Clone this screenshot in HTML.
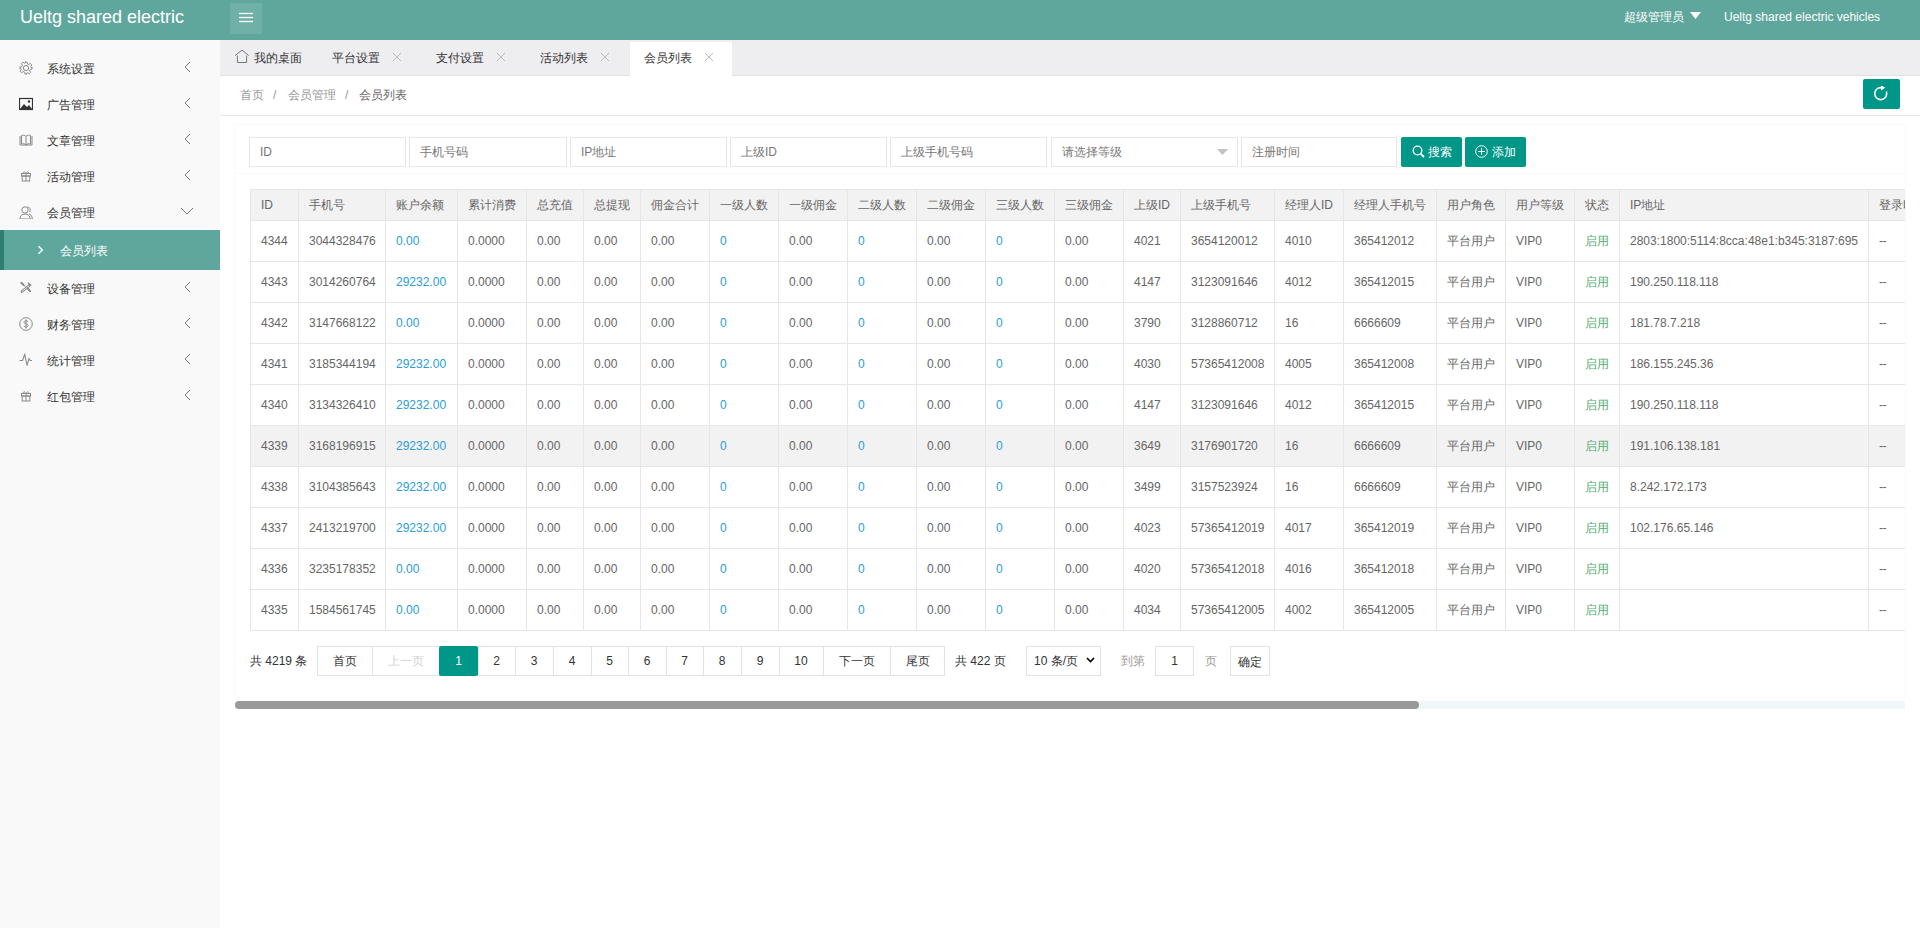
<!DOCTYPE html><html><head><meta charset="utf-8"><style>
*{margin:0;padding:0;box-sizing:border-box}
html,body{width:1920px;height:928px;overflow:hidden;background:#fff;font-family:"Liberation Sans",sans-serif;font-size:12px;color:#666}
.abs{position:absolute}
.t{position:absolute;white-space:nowrap;line-height:14px}
#hdr{left:0;top:0;width:1920px;height:40px;background:#5fa79d}
#side{left:0;top:40px;width:220px;height:888px;background:#f9f9f9}
#tabs{left:220px;top:40px;width:1700px;height:36px;background:#eeeef1;border-bottom:1px solid #e2e2e2}
.cell{position:absolute;white-space:nowrap;overflow:hidden;line-height:14px}
</style></head><body>
<div id="hdr" class="abs"></div>
<div class="t" style="left:20px;top:6px;font-size:18px;line-height:22px;color:#fff">Ueltg shared electric</div>
<div class="abs" style="left:230px;top:3px;width:32px;height:31px;background:rgba(255,255,255,0.1);border-radius:1px"></div>
<svg class="abs" style="left:238px;top:11px" width="16" height="13" viewBox="0 0 16 13"><g stroke="#fff" stroke-width="1.3"><line x1="1" y1="2.5" x2="15" y2="2.5"/><line x1="1" y1="6.5" x2="15" y2="6.5"/><line x1="1" y1="10.5" x2="15" y2="10.5"/></g></svg>
<div class="t" style="left:1624px;top:10px;color:#fff">超级管理员</div>
<svg class="abs" style="left:1690px;top:12px" width="11" height="7" viewBox="0 0 11 7"><path d="M0 0H11L5.5 7Z" fill="#fff"/></svg>
<div class="t" style="left:1724px;top:10px;color:#fff">Ueltg shared electric vehicles</div>
<div id="side" class="abs"></div>
<div class="t" style="left:47px;top:62px;color:#333">系统设置</div>
<svg class="abs" style="left:19px;top:61px" width="14" height="14" viewBox="0 0 14 14"><circle cx="7" cy="7" r="2.6" fill="none" stroke="#888" stroke-width="1"/><path d="M6 1h2l.4 1.8 1.4.6 1.6-1 1.4 1.4-1 1.6.6 1.4L13 6v2l-1.8.4-.6 1.4 1 1.6-1.4 1.4-1.6-1-1.4.6L8 13H6l-.4-1.8-1.4-.6-1.6 1-1.4-1.4 1-1.6-.6-1.4L1 8V6l1.8-.4.6-1.4-1-1.6 1.4-1.4 1.6 1 1.4-.6Z" fill="none" stroke="#888" stroke-width="1"/></svg>
<svg class="abs" style="left:183px;top:61px" width="8" height="12" viewBox="0 0 8 12"><path d="M7 1L2 6l5 5" fill="none" stroke="#777" stroke-width="1"/></svg>
<div class="t" style="left:47px;top:98px;color:#333">广告管理</div>
<svg class="abs" style="left:19px;top:97px" width="14" height="14" viewBox="0 0 14 14"><rect x="0.5" y="1.5" width="13" height="11" fill="none" stroke="#333" stroke-width="1.2"/><path d="M1 12L5 7l3 3 2-2 3 4Z" fill="#333"/><circle cx="10" cy="4.5" r="1.2" fill="#333"/></svg>
<svg class="abs" style="left:183px;top:97px" width="8" height="12" viewBox="0 0 8 12"><path d="M7 1L2 6l5 5" fill="none" stroke="#777" stroke-width="1"/></svg>
<div class="t" style="left:47px;top:134px;color:#333">文章管理</div>
<svg class="abs" style="left:19px;top:133px" width="14" height="14" viewBox="0 0 14 14"><path d="M1 3v9h5.5c.3 0 .5.5.5.5s.2-.5.5-.5H13V3M7 4v8M2.5 2.5C4 2 5.5 2 7 3.5 8.5 2 10 2 11.5 2.5V11c-1.5-.5-3-.5-4.5 1-1.5-1.5-3-1.5-4.5-1Z" fill="none" stroke="#888" stroke-width="1"/></svg>
<svg class="abs" style="left:183px;top:133px" width="8" height="12" viewBox="0 0 8 12"><path d="M7 1L2 6l5 5" fill="none" stroke="#777" stroke-width="1"/></svg>
<div class="t" style="left:47px;top:170px;color:#333">活动管理</div>
<svg class="abs" style="left:19px;top:169px" width="14" height="14" viewBox="0 0 14 14"><rect x="2.5" y="4.5" width="9" height="2.5" fill="none" stroke="#8a8a8a" stroke-width="1"/><rect x="3.2" y="7" width="7.6" height="5" fill="none" stroke="#8a8a8a" stroke-width="1"/><path d="M7 4.5v7.5M7 4.5C5.5 2 4 2.5 4.5 4.5M7 4.5c1.5-2.5 3-2 2.5 0" fill="none" stroke="#8a8a8a" stroke-width="1"/></svg>
<svg class="abs" style="left:183px;top:169px" width="8" height="12" viewBox="0 0 8 12"><path d="M7 1L2 6l5 5" fill="none" stroke="#777" stroke-width="1"/></svg>
<div class="t" style="left:47px;top:206px;color:#333">会员管理</div>
<svg class="abs" style="left:19px;top:205px" width="14" height="14" viewBox="0 0 14 14"><circle cx="6" cy="5" r="3.2" fill="none" stroke="#888" stroke-width="1"/><path d="M0.8 14c0-3 2.2-5 5.2-5s5.2 2 5.2 5Z" fill="none" stroke="#888" stroke-width="1"/><path d="M8.5 2c2.5 0 3.5 3 2 5M10 9c2 .5 3.3 2.5 3.3 5" fill="none" stroke="#888" stroke-width="1"/></svg>
<svg class="abs" style="left:180px;top:207px" width="14" height="8" viewBox="0 0 14 8"><path d="M1 1l6 6 6-6" fill="none" stroke="#777" stroke-width="1"/></svg>
<div class="abs" style="left:0;top:230px;width:220px;height:40px;background:#5fa79d"></div>
<div class="abs" style="left:0;top:230px;width:4px;height:40px;background:#2f7d73"></div>
<svg class="abs" style="left:37px;top:245px" width="7" height="10" viewBox="0 0 7 10"><path d="M1.5 1.2l3.8 3.8-3.8 3.8" fill="none" stroke="#e8fffb" stroke-width="1.6"/></svg>
<div class="t" style="left:60px;top:244px;color:#fff">会员列表</div>
<div class="t" style="left:47px;top:282px;color:#333">设备管理</div>
<svg class="abs" style="left:19px;top:281px" width="14" height="14" viewBox="0 0 14 14"><g transform="translate(1,0.5)"><path d="M1.3 1.3L3.6 3.4" stroke="#8a8a8a" stroke-width="2" stroke-linecap="round"/><path d="M3.6 3.4L5.5 5.2" stroke="#888" stroke-width="1"/><path d="M9.8 3.6L2 10" stroke="#8a8a8a" stroke-width="2.6" stroke-linecap="round"/><path d="M9.6 3.8L2.2 9.8" stroke="#f9f9f9" stroke-width="0.9"/><path d="M8.2 1.2L9.6 3.4 11.2 3.2" fill="none" stroke="#8a8a8a" stroke-width="1.5"/><path d="M7.6 6.8L10 9.6" stroke="#8a8a8a" stroke-width="2.1" stroke-linecap="round"/></g></svg>
<svg class="abs" style="left:183px;top:281px" width="8" height="12" viewBox="0 0 8 12"><path d="M7 1L2 6l5 5" fill="none" stroke="#777" stroke-width="1"/></svg>
<div class="t" style="left:47px;top:318px;color:#333">财务管理</div>
<svg class="abs" style="left:19px;top:317px" width="14" height="14" viewBox="0 0 14 14"><circle cx="7" cy="7" r="6.3" fill="none" stroke="#888" stroke-width="1"/><path d="M9 4.8C8.5 4 7.8 3.8 7 3.8 5.8 3.8 5 4.5 5 5.3c0 1.9 4 1.1 4 3.2 0 .9-.9 1.6-2 1.6-.9 0-1.7-.4-2.1-1.2M7 2.5v9" fill="none" stroke="#888" stroke-width="1"/></svg>
<svg class="abs" style="left:183px;top:317px" width="8" height="12" viewBox="0 0 8 12"><path d="M7 1L2 6l5 5" fill="none" stroke="#777" stroke-width="1"/></svg>
<div class="t" style="left:47px;top:354px;color:#333">统计管理</div>
<svg class="abs" style="left:19px;top:353px" width="14" height="14" viewBox="0 0 14 14"><path d="M0.5 7.5H3.5L5.8 1.5 8 12.5 10 5.5 11.2 7.5H13" fill="none" stroke="#8a8a8a" stroke-width="1.1"/></svg>
<svg class="abs" style="left:183px;top:353px" width="8" height="12" viewBox="0 0 8 12"><path d="M7 1L2 6l5 5" fill="none" stroke="#777" stroke-width="1"/></svg>
<div class="t" style="left:47px;top:390px;color:#333">红包管理</div>
<svg class="abs" style="left:19px;top:389px" width="14" height="14" viewBox="0 0 14 14"><rect x="2.5" y="4.5" width="9" height="2.5" fill="none" stroke="#8a8a8a" stroke-width="1"/><rect x="3.2" y="7" width="7.6" height="5" fill="none" stroke="#8a8a8a" stroke-width="1"/><path d="M7 4.5v7.5M7 4.5C5.5 2 4 2.5 4.5 4.5M7 4.5c1.5-2.5 3-2 2.5 0" fill="none" stroke="#8a8a8a" stroke-width="1"/></svg>
<svg class="abs" style="left:183px;top:389px" width="8" height="12" viewBox="0 0 8 12"><path d="M7 1L2 6l5 5" fill="none" stroke="#777" stroke-width="1"/></svg>
<div id="tabs" class="abs"></div>
<svg class="abs" style="left:234px;top:49px" width="16" height="15" viewBox="0 0 16 15"><path d="M1 6.6L8 1.1l6.8 5.5M3.4 6.6V13.5h9.2V6.6" fill="none" stroke="#777" stroke-width="1"/></svg>
<div class="t" style="left:254px;top:51px;color:#333">我的桌面</div>
<div class="t" style="left:332px;top:51px;color:#333">平台设置</div>
<svg class="abs" style="left:392px;top:52px" width="10" height="10" viewBox="0 0 10 10"><path d="M1 1l8 8M9 1l-8 8" stroke="#bbb" stroke-width="1"/></svg>
<div class="t" style="left:436px;top:51px;color:#333">支付设置</div>
<svg class="abs" style="left:496px;top:52px" width="10" height="10" viewBox="0 0 10 10"><path d="M1 1l8 8M9 1l-8 8" stroke="#bbb" stroke-width="1"/></svg>
<div class="t" style="left:540px;top:51px;color:#333">活动列表</div>
<svg class="abs" style="left:600px;top:52px" width="10" height="10" viewBox="0 0 10 10"><path d="M1 1l8 8M9 1l-8 8" stroke="#bbb" stroke-width="1"/></svg>
<div class="abs" style="left:630px;top:42px;width:102px;height:34px;background:#fff"></div>
<div class="t" style="left:644px;top:51px;color:#333">会员列表</div>
<svg class="abs" style="left:704px;top:52px" width="10" height="10" viewBox="0 0 10 10"><path d="M1 1l8 8M9 1l-8 8" stroke="#bbb" stroke-width="1"/></svg>
<div class="t" style="left:240px;top:88px;color:#999">首页</div>
<div class="t" style="left:273px;top:88px;color:#999">/</div>
<div class="t" style="left:288px;top:88px;color:#999">会员管理</div>
<div class="t" style="left:345px;top:88px;color:#999">/</div>
<div class="t" style="left:359px;top:88px;color:#666">会员列表</div>
<div class="abs" style="left:220px;top:115px;width:1700px;height:1px;background:#e6e6e6"></div>
<div class="abs" style="left:1863px;top:79px;width:37px;height:30px;background:#009688;border-radius:2px"></div>
<svg class="abs" style="left:1873px;top:86px" width="16" height="16" viewBox="0 0 16 16"><path d="M13.4 5.6A6 6 0 1 1 8.2 1.6" fill="none" stroke="#fff" stroke-width="1.6"/><path d="M8 -1L12.2 1.8 8 4.6Z" fill="#fff"/></svg>
<div class="abs" style="left:235px;top:125px;width:1670px;height:48px;background:#fff;box-shadow:0 0 0 1px #fafafa"></div>
<div class="abs" style="left:235px;top:174px;width:1670px;height:523px;background:#fff;box-shadow:0 0 0 1px #fafafa"></div>
<div class="abs" style="left:249px;top:137px;width:157px;height:30px;border:1px solid #e6e6e6;background:#fff"></div>
<div class="t" style="left:260px;top:145px;color:#777">ID</div>
<div class="abs" style="left:409px;top:137px;width:158px;height:30px;border:1px solid #e6e6e6;background:#fff"></div>
<div class="t" style="left:420px;top:145px;color:#777">手机号码</div>
<div class="abs" style="left:570px;top:137px;width:157px;height:30px;border:1px solid #e6e6e6;background:#fff"></div>
<div class="t" style="left:581px;top:145px;color:#777">IP地址</div>
<div class="abs" style="left:730px;top:137px;width:157px;height:30px;border:1px solid #e6e6e6;background:#fff"></div>
<div class="t" style="left:741px;top:145px;color:#777">上级ID</div>
<div class="abs" style="left:890px;top:137px;width:157px;height:30px;border:1px solid #e6e6e6;background:#fff"></div>
<div class="t" style="left:901px;top:145px;color:#777">上级手机号码</div>
<div class="abs" style="left:1051px;top:137px;width:187px;height:30px;border:1px solid #e6e6e6;background:#fff"></div>
<div class="t" style="left:1062px;top:145px;color:#777">请选择等级</div>
<div class="abs" style="left:1241px;top:137px;width:156px;height:30px;border:1px solid #e6e6e6;background:#fff"></div>
<div class="t" style="left:1252px;top:145px;color:#777">注册时间</div>
<svg class="abs" style="left:1217px;top:149px" width="11" height="6" viewBox="0 0 11 6"><path d="M0 0H11L5.5 6Z" fill="#c2c2c2"/></svg>
<div class="abs" style="left:1401px;top:137px;width:61px;height:30px;background:#009688;border-radius:2px"></div>
<svg class="abs" style="left:1412px;top:145px" width="13" height="13" viewBox="0 0 13 13"><circle cx="5.5" cy="5.5" r="4.3" fill="none" stroke="#fff" stroke-width="1.3"/><path d="M8.6 8.6l3.4 3.4" stroke="#fff" stroke-width="1.8"/></svg>
<div class="t" style="left:1428px;top:145px;color:#fff">搜索</div>
<div class="abs" style="left:1465px;top:137px;width:61px;height:30px;background:#009688;border-radius:2px"></div>
<svg class="abs" style="left:1475px;top:145px" width="13" height="13" viewBox="0 0 13 13"><circle cx="6.5" cy="6.5" r="5.8" fill="none" stroke="#fff" stroke-width="1"/><path d="M6.5 3v7M3 6.5h7" stroke="#fff" stroke-width="1"/></svg>
<div class="t" style="left:1492px;top:145px;color:#fff">添加</div>
<div class="abs" style="left:0;top:0;width:1905px;height:928px;overflow:hidden">
<div class="abs" style="left:250px;top:190px;width:1740px;height:30px;background:#f2f2f2"></div>
<div class="abs" style="left:250px;top:426px;width:1740px;height:40px;background:#f2f2f2"></div>
<div class="abs" style="left:250px;top:189px;width:1740px;height:1px;background:#e6e6e6"></div>
<div class="abs" style="left:250px;top:220px;width:1740px;height:1px;background:#e6e6e6"></div>
<div class="abs" style="left:250px;top:261px;width:1740px;height:1px;background:#e6e6e6"></div>
<div class="abs" style="left:250px;top:302px;width:1740px;height:1px;background:#e6e6e6"></div>
<div class="abs" style="left:250px;top:343px;width:1740px;height:1px;background:#e6e6e6"></div>
<div class="abs" style="left:250px;top:384px;width:1740px;height:1px;background:#e6e6e6"></div>
<div class="abs" style="left:250px;top:425px;width:1740px;height:1px;background:#e6e6e6"></div>
<div class="abs" style="left:250px;top:466px;width:1740px;height:1px;background:#e6e6e6"></div>
<div class="abs" style="left:250px;top:507px;width:1740px;height:1px;background:#e6e6e6"></div>
<div class="abs" style="left:250px;top:548px;width:1740px;height:1px;background:#e6e6e6"></div>
<div class="abs" style="left:250px;top:589px;width:1740px;height:1px;background:#e6e6e6"></div>
<div class="abs" style="left:250px;top:630px;width:1740px;height:1px;background:#e6e6e6"></div>
<div class="abs" style="left:250px;top:189px;width:1px;height:442px;background:#e6e6e6"></div>
<div class="abs" style="left:298px;top:189px;width:1px;height:442px;background:#e6e6e6"></div>
<div class="abs" style="left:385px;top:189px;width:1px;height:442px;background:#e6e6e6"></div>
<div class="abs" style="left:457px;top:189px;width:1px;height:442px;background:#e6e6e6"></div>
<div class="abs" style="left:526px;top:189px;width:1px;height:442px;background:#e6e6e6"></div>
<div class="abs" style="left:583px;top:189px;width:1px;height:442px;background:#e6e6e6"></div>
<div class="abs" style="left:640px;top:189px;width:1px;height:442px;background:#e6e6e6"></div>
<div class="abs" style="left:709px;top:189px;width:1px;height:442px;background:#e6e6e6"></div>
<div class="abs" style="left:778px;top:189px;width:1px;height:442px;background:#e6e6e6"></div>
<div class="abs" style="left:847px;top:189px;width:1px;height:442px;background:#e6e6e6"></div>
<div class="abs" style="left:916px;top:189px;width:1px;height:442px;background:#e6e6e6"></div>
<div class="abs" style="left:985px;top:189px;width:1px;height:442px;background:#e6e6e6"></div>
<div class="abs" style="left:1054px;top:189px;width:1px;height:442px;background:#e6e6e6"></div>
<div class="abs" style="left:1123px;top:189px;width:1px;height:442px;background:#e6e6e6"></div>
<div class="abs" style="left:1180px;top:189px;width:1px;height:442px;background:#e6e6e6"></div>
<div class="abs" style="left:1274px;top:189px;width:1px;height:442px;background:#e6e6e6"></div>
<div class="abs" style="left:1343px;top:189px;width:1px;height:442px;background:#e6e6e6"></div>
<div class="abs" style="left:1436px;top:189px;width:1px;height:442px;background:#e6e6e6"></div>
<div class="abs" style="left:1505px;top:189px;width:1px;height:442px;background:#e6e6e6"></div>
<div class="abs" style="left:1574px;top:189px;width:1px;height:442px;background:#e6e6e6"></div>
<div class="abs" style="left:1619px;top:189px;width:1px;height:442px;background:#e6e6e6"></div>
<div class="abs" style="left:1868px;top:189px;width:1px;height:442px;background:#e6e6e6"></div>
<div class="t" style="left:261px;top:198px;color:#666">ID</div>
<div class="t" style="left:309px;top:198px;color:#666">手机号</div>
<div class="t" style="left:396px;top:198px;color:#666">账户余额</div>
<div class="t" style="left:468px;top:198px;color:#666">累计消费</div>
<div class="t" style="left:537px;top:198px;color:#666">总充值</div>
<div class="t" style="left:594px;top:198px;color:#666">总提现</div>
<div class="t" style="left:651px;top:198px;color:#666">佣金合计</div>
<div class="t" style="left:720px;top:198px;color:#666">一级人数</div>
<div class="t" style="left:789px;top:198px;color:#666">一级佣金</div>
<div class="t" style="left:858px;top:198px;color:#666">二级人数</div>
<div class="t" style="left:927px;top:198px;color:#666">二级佣金</div>
<div class="t" style="left:996px;top:198px;color:#666">三级人数</div>
<div class="t" style="left:1065px;top:198px;color:#666">三级佣金</div>
<div class="t" style="left:1134px;top:198px;color:#666">上级ID</div>
<div class="t" style="left:1191px;top:198px;color:#666">上级手机号</div>
<div class="t" style="left:1285px;top:198px;color:#666">经理人ID</div>
<div class="t" style="left:1354px;top:198px;color:#666">经理人手机号</div>
<div class="t" style="left:1447px;top:198px;color:#666">用户角色</div>
<div class="t" style="left:1516px;top:198px;color:#666">用户等级</div>
<div class="t" style="left:1585px;top:198px;color:#666">状态</div>
<div class="t" style="left:1630px;top:198px;color:#666">IP地址</div>
<div class="t" style="left:1879px;top:198px;color:#666">登录时间</div>
<div class="t" style="left:261px;top:234px;color:#666">4344</div>
<div class="t" style="left:309px;top:234px;color:#666">3044328476</div>
<div class="t" style="left:396px;top:234px;color:#2a9dd8">0.00</div>
<div class="t" style="left:468px;top:234px;color:#666">0.0000</div>
<div class="t" style="left:537px;top:234px;color:#666">0.00</div>
<div class="t" style="left:594px;top:234px;color:#666">0.00</div>
<div class="t" style="left:651px;top:234px;color:#666">0.00</div>
<div class="t" style="left:720px;top:234px;color:#2a9dd8">0</div>
<div class="t" style="left:789px;top:234px;color:#666">0.00</div>
<div class="t" style="left:858px;top:234px;color:#2a9dd8">0</div>
<div class="t" style="left:927px;top:234px;color:#666">0.00</div>
<div class="t" style="left:996px;top:234px;color:#2a9dd8">0</div>
<div class="t" style="left:1065px;top:234px;color:#666">0.00</div>
<div class="t" style="left:1134px;top:234px;color:#666">4021</div>
<div class="t" style="left:1191px;top:234px;color:#666">3654120012</div>
<div class="t" style="left:1285px;top:234px;color:#666">4010</div>
<div class="t" style="left:1354px;top:234px;color:#666">365412012</div>
<div class="t" style="left:1447px;top:234px;color:#666">平台用户</div>
<div class="t" style="left:1516px;top:234px;color:#666">VIP0</div>
<div class="t" style="left:1585px;top:234px;color:#52ad6e">启用</div>
<div class="t" style="left:1630px;top:234px;color:#666">2803:1800:5114:8cca:48e1:b345:3187:695</div>
<div class="t" style="left:1879px;top:234px;color:#666"><span style="letter-spacing:-0.6px">--</span></div>
<div class="t" style="left:261px;top:275px;color:#666">4343</div>
<div class="t" style="left:309px;top:275px;color:#666">3014260764</div>
<div class="t" style="left:396px;top:275px;color:#2a9dd8">29232.00</div>
<div class="t" style="left:468px;top:275px;color:#666">0.0000</div>
<div class="t" style="left:537px;top:275px;color:#666">0.00</div>
<div class="t" style="left:594px;top:275px;color:#666">0.00</div>
<div class="t" style="left:651px;top:275px;color:#666">0.00</div>
<div class="t" style="left:720px;top:275px;color:#2a9dd8">0</div>
<div class="t" style="left:789px;top:275px;color:#666">0.00</div>
<div class="t" style="left:858px;top:275px;color:#2a9dd8">0</div>
<div class="t" style="left:927px;top:275px;color:#666">0.00</div>
<div class="t" style="left:996px;top:275px;color:#2a9dd8">0</div>
<div class="t" style="left:1065px;top:275px;color:#666">0.00</div>
<div class="t" style="left:1134px;top:275px;color:#666">4147</div>
<div class="t" style="left:1191px;top:275px;color:#666">3123091646</div>
<div class="t" style="left:1285px;top:275px;color:#666">4012</div>
<div class="t" style="left:1354px;top:275px;color:#666">365412015</div>
<div class="t" style="left:1447px;top:275px;color:#666">平台用户</div>
<div class="t" style="left:1516px;top:275px;color:#666">VIP0</div>
<div class="t" style="left:1585px;top:275px;color:#52ad6e">启用</div>
<div class="t" style="left:1630px;top:275px;color:#666">190.250.118.118</div>
<div class="t" style="left:1879px;top:275px;color:#666"><span style="letter-spacing:-0.6px">--</span></div>
<div class="t" style="left:261px;top:316px;color:#666">4342</div>
<div class="t" style="left:309px;top:316px;color:#666">3147668122</div>
<div class="t" style="left:396px;top:316px;color:#2a9dd8">0.00</div>
<div class="t" style="left:468px;top:316px;color:#666">0.0000</div>
<div class="t" style="left:537px;top:316px;color:#666">0.00</div>
<div class="t" style="left:594px;top:316px;color:#666">0.00</div>
<div class="t" style="left:651px;top:316px;color:#666">0.00</div>
<div class="t" style="left:720px;top:316px;color:#2a9dd8">0</div>
<div class="t" style="left:789px;top:316px;color:#666">0.00</div>
<div class="t" style="left:858px;top:316px;color:#2a9dd8">0</div>
<div class="t" style="left:927px;top:316px;color:#666">0.00</div>
<div class="t" style="left:996px;top:316px;color:#2a9dd8">0</div>
<div class="t" style="left:1065px;top:316px;color:#666">0.00</div>
<div class="t" style="left:1134px;top:316px;color:#666">3790</div>
<div class="t" style="left:1191px;top:316px;color:#666">3128860712</div>
<div class="t" style="left:1285px;top:316px;color:#666">16</div>
<div class="t" style="left:1354px;top:316px;color:#666">6666609</div>
<div class="t" style="left:1447px;top:316px;color:#666">平台用户</div>
<div class="t" style="left:1516px;top:316px;color:#666">VIP0</div>
<div class="t" style="left:1585px;top:316px;color:#52ad6e">启用</div>
<div class="t" style="left:1630px;top:316px;color:#666">181.78.7.218</div>
<div class="t" style="left:1879px;top:316px;color:#666"><span style="letter-spacing:-0.6px">--</span></div>
<div class="t" style="left:261px;top:357px;color:#666">4341</div>
<div class="t" style="left:309px;top:357px;color:#666">3185344194</div>
<div class="t" style="left:396px;top:357px;color:#2a9dd8">29232.00</div>
<div class="t" style="left:468px;top:357px;color:#666">0.0000</div>
<div class="t" style="left:537px;top:357px;color:#666">0.00</div>
<div class="t" style="left:594px;top:357px;color:#666">0.00</div>
<div class="t" style="left:651px;top:357px;color:#666">0.00</div>
<div class="t" style="left:720px;top:357px;color:#2a9dd8">0</div>
<div class="t" style="left:789px;top:357px;color:#666">0.00</div>
<div class="t" style="left:858px;top:357px;color:#2a9dd8">0</div>
<div class="t" style="left:927px;top:357px;color:#666">0.00</div>
<div class="t" style="left:996px;top:357px;color:#2a9dd8">0</div>
<div class="t" style="left:1065px;top:357px;color:#666">0.00</div>
<div class="t" style="left:1134px;top:357px;color:#666">4030</div>
<div class="t" style="left:1191px;top:357px;color:#666">57365412008</div>
<div class="t" style="left:1285px;top:357px;color:#666">4005</div>
<div class="t" style="left:1354px;top:357px;color:#666">365412008</div>
<div class="t" style="left:1447px;top:357px;color:#666">平台用户</div>
<div class="t" style="left:1516px;top:357px;color:#666">VIP0</div>
<div class="t" style="left:1585px;top:357px;color:#52ad6e">启用</div>
<div class="t" style="left:1630px;top:357px;color:#666">186.155.245.36</div>
<div class="t" style="left:1879px;top:357px;color:#666"><span style="letter-spacing:-0.6px">--</span></div>
<div class="t" style="left:261px;top:398px;color:#666">4340</div>
<div class="t" style="left:309px;top:398px;color:#666">3134326410</div>
<div class="t" style="left:396px;top:398px;color:#2a9dd8">29232.00</div>
<div class="t" style="left:468px;top:398px;color:#666">0.0000</div>
<div class="t" style="left:537px;top:398px;color:#666">0.00</div>
<div class="t" style="left:594px;top:398px;color:#666">0.00</div>
<div class="t" style="left:651px;top:398px;color:#666">0.00</div>
<div class="t" style="left:720px;top:398px;color:#2a9dd8">0</div>
<div class="t" style="left:789px;top:398px;color:#666">0.00</div>
<div class="t" style="left:858px;top:398px;color:#2a9dd8">0</div>
<div class="t" style="left:927px;top:398px;color:#666">0.00</div>
<div class="t" style="left:996px;top:398px;color:#2a9dd8">0</div>
<div class="t" style="left:1065px;top:398px;color:#666">0.00</div>
<div class="t" style="left:1134px;top:398px;color:#666">4147</div>
<div class="t" style="left:1191px;top:398px;color:#666">3123091646</div>
<div class="t" style="left:1285px;top:398px;color:#666">4012</div>
<div class="t" style="left:1354px;top:398px;color:#666">365412015</div>
<div class="t" style="left:1447px;top:398px;color:#666">平台用户</div>
<div class="t" style="left:1516px;top:398px;color:#666">VIP0</div>
<div class="t" style="left:1585px;top:398px;color:#52ad6e">启用</div>
<div class="t" style="left:1630px;top:398px;color:#666">190.250.118.118</div>
<div class="t" style="left:1879px;top:398px;color:#666"><span style="letter-spacing:-0.6px">--</span></div>
<div class="t" style="left:261px;top:439px;color:#666">4339</div>
<div class="t" style="left:309px;top:439px;color:#666">3168196915</div>
<div class="t" style="left:396px;top:439px;color:#2a9dd8">29232.00</div>
<div class="t" style="left:468px;top:439px;color:#666">0.0000</div>
<div class="t" style="left:537px;top:439px;color:#666">0.00</div>
<div class="t" style="left:594px;top:439px;color:#666">0.00</div>
<div class="t" style="left:651px;top:439px;color:#666">0.00</div>
<div class="t" style="left:720px;top:439px;color:#2a9dd8">0</div>
<div class="t" style="left:789px;top:439px;color:#666">0.00</div>
<div class="t" style="left:858px;top:439px;color:#2a9dd8">0</div>
<div class="t" style="left:927px;top:439px;color:#666">0.00</div>
<div class="t" style="left:996px;top:439px;color:#2a9dd8">0</div>
<div class="t" style="left:1065px;top:439px;color:#666">0.00</div>
<div class="t" style="left:1134px;top:439px;color:#666">3649</div>
<div class="t" style="left:1191px;top:439px;color:#666">3176901720</div>
<div class="t" style="left:1285px;top:439px;color:#666">16</div>
<div class="t" style="left:1354px;top:439px;color:#666">6666609</div>
<div class="t" style="left:1447px;top:439px;color:#666">平台用户</div>
<div class="t" style="left:1516px;top:439px;color:#666">VIP0</div>
<div class="t" style="left:1585px;top:439px;color:#52ad6e">启用</div>
<div class="t" style="left:1630px;top:439px;color:#666">191.106.138.181</div>
<div class="t" style="left:1879px;top:439px;color:#666"><span style="letter-spacing:-0.6px">--</span></div>
<div class="t" style="left:261px;top:480px;color:#666">4338</div>
<div class="t" style="left:309px;top:480px;color:#666">3104385643</div>
<div class="t" style="left:396px;top:480px;color:#2a9dd8">29232.00</div>
<div class="t" style="left:468px;top:480px;color:#666">0.0000</div>
<div class="t" style="left:537px;top:480px;color:#666">0.00</div>
<div class="t" style="left:594px;top:480px;color:#666">0.00</div>
<div class="t" style="left:651px;top:480px;color:#666">0.00</div>
<div class="t" style="left:720px;top:480px;color:#2a9dd8">0</div>
<div class="t" style="left:789px;top:480px;color:#666">0.00</div>
<div class="t" style="left:858px;top:480px;color:#2a9dd8">0</div>
<div class="t" style="left:927px;top:480px;color:#666">0.00</div>
<div class="t" style="left:996px;top:480px;color:#2a9dd8">0</div>
<div class="t" style="left:1065px;top:480px;color:#666">0.00</div>
<div class="t" style="left:1134px;top:480px;color:#666">3499</div>
<div class="t" style="left:1191px;top:480px;color:#666">3157523924</div>
<div class="t" style="left:1285px;top:480px;color:#666">16</div>
<div class="t" style="left:1354px;top:480px;color:#666">6666609</div>
<div class="t" style="left:1447px;top:480px;color:#666">平台用户</div>
<div class="t" style="left:1516px;top:480px;color:#666">VIP0</div>
<div class="t" style="left:1585px;top:480px;color:#52ad6e">启用</div>
<div class="t" style="left:1630px;top:480px;color:#666">8.242.172.173</div>
<div class="t" style="left:1879px;top:480px;color:#666"><span style="letter-spacing:-0.6px">--</span></div>
<div class="t" style="left:261px;top:521px;color:#666">4337</div>
<div class="t" style="left:309px;top:521px;color:#666">2413219700</div>
<div class="t" style="left:396px;top:521px;color:#2a9dd8">29232.00</div>
<div class="t" style="left:468px;top:521px;color:#666">0.0000</div>
<div class="t" style="left:537px;top:521px;color:#666">0.00</div>
<div class="t" style="left:594px;top:521px;color:#666">0.00</div>
<div class="t" style="left:651px;top:521px;color:#666">0.00</div>
<div class="t" style="left:720px;top:521px;color:#2a9dd8">0</div>
<div class="t" style="left:789px;top:521px;color:#666">0.00</div>
<div class="t" style="left:858px;top:521px;color:#2a9dd8">0</div>
<div class="t" style="left:927px;top:521px;color:#666">0.00</div>
<div class="t" style="left:996px;top:521px;color:#2a9dd8">0</div>
<div class="t" style="left:1065px;top:521px;color:#666">0.00</div>
<div class="t" style="left:1134px;top:521px;color:#666">4023</div>
<div class="t" style="left:1191px;top:521px;color:#666">57365412019</div>
<div class="t" style="left:1285px;top:521px;color:#666">4017</div>
<div class="t" style="left:1354px;top:521px;color:#666">365412019</div>
<div class="t" style="left:1447px;top:521px;color:#666">平台用户</div>
<div class="t" style="left:1516px;top:521px;color:#666">VIP0</div>
<div class="t" style="left:1585px;top:521px;color:#52ad6e">启用</div>
<div class="t" style="left:1630px;top:521px;color:#666">102.176.65.146</div>
<div class="t" style="left:1879px;top:521px;color:#666"><span style="letter-spacing:-0.6px">--</span></div>
<div class="t" style="left:261px;top:562px;color:#666">4336</div>
<div class="t" style="left:309px;top:562px;color:#666">3235178352</div>
<div class="t" style="left:396px;top:562px;color:#2a9dd8">0.00</div>
<div class="t" style="left:468px;top:562px;color:#666">0.0000</div>
<div class="t" style="left:537px;top:562px;color:#666">0.00</div>
<div class="t" style="left:594px;top:562px;color:#666">0.00</div>
<div class="t" style="left:651px;top:562px;color:#666">0.00</div>
<div class="t" style="left:720px;top:562px;color:#2a9dd8">0</div>
<div class="t" style="left:789px;top:562px;color:#666">0.00</div>
<div class="t" style="left:858px;top:562px;color:#2a9dd8">0</div>
<div class="t" style="left:927px;top:562px;color:#666">0.00</div>
<div class="t" style="left:996px;top:562px;color:#2a9dd8">0</div>
<div class="t" style="left:1065px;top:562px;color:#666">0.00</div>
<div class="t" style="left:1134px;top:562px;color:#666">4020</div>
<div class="t" style="left:1191px;top:562px;color:#666">57365412018</div>
<div class="t" style="left:1285px;top:562px;color:#666">4016</div>
<div class="t" style="left:1354px;top:562px;color:#666">365412018</div>
<div class="t" style="left:1447px;top:562px;color:#666">平台用户</div>
<div class="t" style="left:1516px;top:562px;color:#666">VIP0</div>
<div class="t" style="left:1585px;top:562px;color:#52ad6e">启用</div>
<div class="t" style="left:1630px;top:562px;color:#666"></div>
<div class="t" style="left:1879px;top:562px;color:#666"><span style="letter-spacing:-0.6px">--</span></div>
<div class="t" style="left:261px;top:603px;color:#666">4335</div>
<div class="t" style="left:309px;top:603px;color:#666">1584561745</div>
<div class="t" style="left:396px;top:603px;color:#2a9dd8">0.00</div>
<div class="t" style="left:468px;top:603px;color:#666">0.0000</div>
<div class="t" style="left:537px;top:603px;color:#666">0.00</div>
<div class="t" style="left:594px;top:603px;color:#666">0.00</div>
<div class="t" style="left:651px;top:603px;color:#666">0.00</div>
<div class="t" style="left:720px;top:603px;color:#2a9dd8">0</div>
<div class="t" style="left:789px;top:603px;color:#666">0.00</div>
<div class="t" style="left:858px;top:603px;color:#2a9dd8">0</div>
<div class="t" style="left:927px;top:603px;color:#666">0.00</div>
<div class="t" style="left:996px;top:603px;color:#2a9dd8">0</div>
<div class="t" style="left:1065px;top:603px;color:#666">0.00</div>
<div class="t" style="left:1134px;top:603px;color:#666">4034</div>
<div class="t" style="left:1191px;top:603px;color:#666">57365412005</div>
<div class="t" style="left:1285px;top:603px;color:#666">4002</div>
<div class="t" style="left:1354px;top:603px;color:#666">365412005</div>
<div class="t" style="left:1447px;top:603px;color:#666">平台用户</div>
<div class="t" style="left:1516px;top:603px;color:#666">VIP0</div>
<div class="t" style="left:1585px;top:603px;color:#52ad6e">启用</div>
<div class="t" style="left:1630px;top:603px;color:#666"></div>
<div class="t" style="left:1879px;top:603px;color:#666"><span style="letter-spacing:-0.6px">--</span></div>
</div>
<div class="t" style="left:250px;top:654px;color:#333">共 4219 条</div>
<div class="abs" style="left:317px;top:646px;width:628px;height:30px;border:1px solid #e2e2e2;background:#fff"></div>
<div class="abs" style="left:372px;top:646px;width:1px;height:30px;background:#e2e2e2"></div>
<div class="abs" style="left:439px;top:646px;width:1px;height:30px;background:#e2e2e2"></div>
<div class="abs" style="left:478px;top:646px;width:1px;height:30px;background:#e2e2e2"></div>
<div class="abs" style="left:515px;top:646px;width:1px;height:30px;background:#e2e2e2"></div>
<div class="abs" style="left:553px;top:646px;width:1px;height:30px;background:#e2e2e2"></div>
<div class="abs" style="left:591px;top:646px;width:1px;height:30px;background:#e2e2e2"></div>
<div class="abs" style="left:628px;top:646px;width:1px;height:30px;background:#e2e2e2"></div>
<div class="abs" style="left:666px;top:646px;width:1px;height:30px;background:#e2e2e2"></div>
<div class="abs" style="left:703px;top:646px;width:1px;height:30px;background:#e2e2e2"></div>
<div class="abs" style="left:741px;top:646px;width:1px;height:30px;background:#e2e2e2"></div>
<div class="abs" style="left:779px;top:646px;width:1px;height:30px;background:#e2e2e2"></div>
<div class="abs" style="left:823px;top:646px;width:1px;height:30px;background:#e2e2e2"></div>
<div class="abs" style="left:890px;top:646px;width:1px;height:30px;background:#e2e2e2"></div>
<div class="abs" style="left:439px;top:646px;width:39px;height:30px;background:#009688;border-radius:2px"></div>
<div class="t" style="left:317px;top:654px;width:55px;text-align:center;color:#333;">首页</div>
<div class="t" style="left:372px;top:654px;width:67px;text-align:center;color:#d2d2d2;">上一页</div>
<div class="t" style="left:439px;top:654px;width:39px;text-align:center;color:#fff;">1</div>
<div class="t" style="left:478px;top:654px;width:37px;text-align:center;color:#333;">2</div>
<div class="t" style="left:515px;top:654px;width:38px;text-align:center;color:#333;">3</div>
<div class="t" style="left:553px;top:654px;width:38px;text-align:center;color:#333;">4</div>
<div class="t" style="left:591px;top:654px;width:37px;text-align:center;color:#333;">5</div>
<div class="t" style="left:628px;top:654px;width:38px;text-align:center;color:#333;">6</div>
<div class="t" style="left:666px;top:654px;width:37px;text-align:center;color:#333;">7</div>
<div class="t" style="left:703px;top:654px;width:38px;text-align:center;color:#333;">8</div>
<div class="t" style="left:741px;top:654px;width:38px;text-align:center;color:#333;">9</div>
<div class="t" style="left:779px;top:654px;width:44px;text-align:center;color:#333;">10</div>
<div class="t" style="left:823px;top:654px;width:67px;text-align:center;color:#333;">下一页</div>
<div class="t" style="left:890px;top:654px;width:55px;text-align:center;color:#333;">尾页</div>
<div class="t" style="left:955px;top:654px;color:#333">共 422 页</div>
<div class="abs" style="left:1026px;top:646px;width:75px;height:30px;border:1px solid #e2e2e2;background:#fff"></div>
<div class="t" style="left:1034px;top:654px;color:#333">10 条/页</div>
<svg class="abs" style="left:1086px;top:657px" width="9" height="6" viewBox="0 0 9 6"><path d="M1 1l3.5 3.5L8 1" fill="none" stroke="#000" stroke-width="1.6"/></svg>
<div class="t" style="left:1121px;top:654px;color:#999">到第</div>
<div class="abs" style="left:1155px;top:646px;width:39px;height:30px;border:1px solid #e2e2e2;background:#fff"></div>
<div class="t" style="left:1155px;top:654px;width:39px;text-align:center;color:#333;">1</div>
<div class="t" style="left:1205px;top:654px;color:#999">页</div>
<div class="abs" style="left:1230px;top:646px;width:40px;height:30px;border:1px solid #e2e2e2;background:#fff"></div>
<div class="t" style="left:1230px;top:655px;width:40px;text-align:center;color:#333;font-size:12px">确定</div>
<div class="abs" style="left:235px;top:701px;width:1670px;height:8px;background:#f1f6f9"></div>
<div class="abs" style="left:235px;top:701px;width:1184px;height:8px;background:#999;border-radius:4px"></div>
</body></html>
